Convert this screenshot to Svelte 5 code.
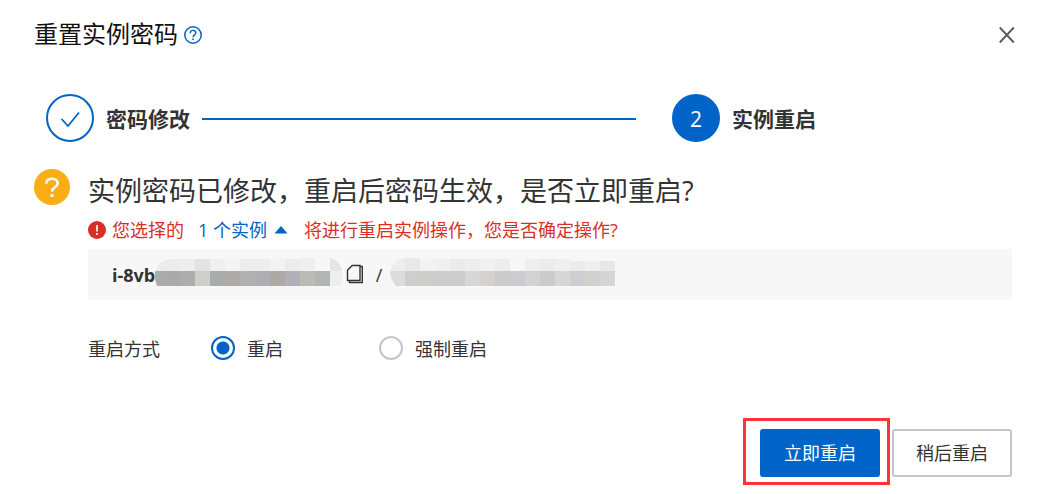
<script lang="ts">
const steps = [
  { title: "密码修改", done: true },
  { title: "实例重启", done: false },
];

const modes = [
  { value: "normal", label: "重启" },
  { value: "force", label: "强制重启" },
];

// masked values are drawn as two rows of grey cells
const idMask = {
  width: 188,
  offset: 10,
  top: ["#ececec", "#ececea", "#eeeeed", "#e3e3e4", "#eeefef", "#f3f4f4", "#ececec", "#eeeeec", "#f1f2f2", "#ececec", "#eeefee", "#f7f7f7", "#e5e5e3", "#efeff0"],
  bottom: ["#ababab", "#a9aaab", "#adadad", "#cecfca", "#a9abad", "#aeaba8", "#b1b1b1", "#adaeb1", "#ada9a5", "#b0b1b6", "#bbbab5", "#b3b5b4", "#eceef0"],
};

const nameMask = {
  width: 225,
  offset: 15,
  top: ["#ededed", "#e9e9e9", "#f2f2f2", "#f0f0f0", "#ebebeb", "#eeeeee", "#f1f1f1", "#ededed", "#f6f8f7", "#efefef", "#ebedec", "#efefef", "#ebebeb", "#efefed", "#e7e7e7"],
  bottom: ["#dddcdc", "#cecece", "#cdcdca", "#cbcccb", "#cccccc", "#d7d7d7", "#d3d2cf", "#cbcbcb", "#cbccd2", "#d2d2d2", "#cbcbcb", "#d6d6d6", "#cdced1", "#d1d1ce", "#d5d5d5"],
};

let mode = $state("normal");
let expanded = $state(true);
</script>

{#snippet mask(data: typeof idMask, id: string)}
  <svg class="mask" width={data.width} height="28" aria-hidden="true">
    <clipPath {id}>
      <path
        d={id === "mask-id"
          ? "M0 14Q4 1 18 1H144V0H176Q187 4 187 16Q188 24 186 28H2Q-1 20 0 14Z"
          : "M0 14Q3 0 18 0H30V1H180V3H225V28H6Q0 20 0 14Z"}
      />
    </clipPath>
    <g clip-path="url(#{id})">
      {#each data.top as color, i (i)}
        <rect x={i ? data.offset + (i - 1) * 15 : 0} y="0" width="15" height="13" fill={color} />
      {/each}
      {#each data.bottom as color, i (i)}
        <rect x={i ? data.offset + (i - 1) * 15 : 0} y="13" width="15" height="15" fill={color} />
      {/each}
    </g>
  </svg>
{/snippet}

<div class="dialog" role="dialog" aria-labelledby="dialog-title">
  <header>
    <h1 id="dialog-title">重置实例密码</h1>
    <button class="icon-btn help" type="button" aria-label="帮助">
      <svg width="18" height="18" viewBox="0 0 18 18" fill="none" stroke="#0064c8">
        <circle cx="9" cy="9" r="8.2" stroke-width="1.5" />
        <path d="M6.2 7.2C6.2 5.3 7.4 4.4 9 4.4S11.8 5.4 11.8 7C11.8 8.9 9 8.9 9 11.2" stroke-width="1.4" />
        <path d="M9 12.4V14" stroke-width="1.6" />
      </svg>
    </button>
    <button class="icon-btn close" type="button" aria-label="关闭">
      <svg width="18" height="18" viewBox="0 0 18 18" fill="none" stroke="#5c5c60" stroke-width="1.9">
        <path d="M1.8 1.5 15.8 16.5M15.8 1.5 1.8 16.5" />
      </svg>
    </button>
  </header>

  <ol class="steps">
    {#each steps as step, i (step.title)}
      <li class:done={step.done}>
        <span class="step-node">
          {#if step.done}
            <svg width="20" height="18" viewBox="0 0 20 18" fill="none" stroke="#0064c8" stroke-width="1.8">
              <path d="M1.5 9 8 16 19 2.5" />
            </svg>
          {:else}
            {i + 1}
          {/if}
        </span>
        <span class="step-title">{step.title}</span>
      </li>
    {/each}
  </ol>

  <main>
    <svg width="36" height="36" viewBox="0 0 36 36" fill="none" aria-hidden="true">
      <circle cx="18" cy="18" r="18" fill="#faad14" />
      <path
        d="M12.3 14.8C12.3 11.4 14.7 9.8 18 9.8S23.7 11.6 23.7 14.4C23.7 18.2 18 18.4 18 22.4"
        stroke="#fff"
        stroke-width="2.5"
      />
      <circle cx="18" cy="26.5" r="1.8" fill="#fff" />
    </svg>

    <div class="content">
      <h2>实例密码已修改，重启后密码生效，是否立即重启?</h2>
      <div class="warning">
        <svg width="18" height="18" viewBox="0 0 18 18" aria-hidden="true">
          <circle cx="9" cy="9" r="9" fill="#d93026" />
          <path d="M9 4V10.5M9 12V14" stroke="#fff" stroke-width="1.6" />
        </svg>
        <span>您选择的</span>
        <button class="toggle" type="button" aria-expanded={expanded} onclick={() => (expanded = !expanded)}>
          1 个实例
          <svg class:collapsed={!expanded} width="14" height="8" viewBox="0 0 14 8" aria-hidden="true">
            <path d="M7 0 13.5 7.5H.5Z" fill="#0064c8" />
          </svg>
        </button>
        <span>将进行重启实例操作，您是否确定操作?</span>
      </div>

      {#if expanded}
        <div class="instance">
          <strong>i-8vb</strong>
          {@render mask(idMask, "mask-id")}
          <button class="icon-btn copy" type="button" aria-label="复制">
            <svg width="18" height="20" viewBox="0 0 18 20" fill="none" stroke="#333" stroke-width="1.4">
              <path d="M6.2 1.5H14V16.5H1.5V6.2Z" />
              <path d="M14 2.5H16.3V18.5H3.5V16.5" />
            </svg>
          </button>
          <span class="slash">/</span>
          {@render mask(nameMask, "mask-name")}
        </div>
      {/if}

      <fieldset>
        <legend>重启方式</legend>
        {#each modes as item (item.value)}
          <label>
            <input type="radio" name="mode" value={item.value} bind:group={mode} />
            <span>{item.label}</span>
          </label>
        {/each}
      </fieldset>
    </div>
  </main>

  <footer>
    <div class="highlight">
      <button class="btn primary" type="button">立即重启</button>
    </div>
    <button class="btn" type="button">稍后重启</button>
  </footer>
</div>

<style>
:global(body) {
  margin: 0;
  background: #fff;
}

.dialog {
  box-sizing: border-box;
  padding: 0 26px 16px 34px;
  color: #333;
  font-family: "Open Sans", "Noto Sans CJK SC", sans-serif;
  font-size: 18px;
  line-height: 24px;
}

button,
input {
  font: inherit;
  margin: 0;
}

svg {
  display: block;
  flex: none;
}

header {
  display: flex;
  align-items: center;
  height: 70px;
}

h1 {
  margin: 0;
  padding-bottom: 2px;
  color: #111;
  font-size: 24px;
  font-weight: 400;
  line-height: 36px;
}

.icon-btn {
  padding: 0;
  border: 0;
  background: none;
  cursor: pointer;
}

.help {
  margin-left: 6px;
}

.close {
  margin-left: auto;
  margin-right: -4px;
}

.steps {
  display: flex;
  margin: 24px 0 0;
  padding: 0 0 0 12px;
  list-style: none;
}

.steps li {
  display: flex;
  align-items: center;
  width: 340px;
}

.steps li.done {
  flex: 1;
}

.steps li.done::after {
  content: "";
  flex: 1;
  height: 2px;
  margin: 2px 36px 0 12px;
  background: #0064c8;
}

.step-node {
  box-sizing: border-box;
  display: flex;
  align-items: center;
  justify-content: center;
  width: 48px;
  height: 48px;
  padding-top: 2px;
  border: 2px solid #0064c8;
  border-radius: 50%;
  background: #0064c8;
  color: #fff;
  font-size: 21px;
}

.done .step-node {
  background: #fff;
}

.step-title {
  margin-left: 12px;
  padding-top: 2px;
  font-size: 21px;
  font-weight: 700;
}

main {
  display: flex;
  gap: 18px;
  margin-top: 27px;
}

.content {
  flex: 1;
  min-width: 0;
}

h2 {
  margin: 0;
  font-size: 27px;
  font-weight: 400;
  line-height: 44px;
}

.warning {
  display: flex;
  align-items: center;
  height: 34px;
  padding-bottom: 2px;
  color: #d93026;
}

.warning > svg {
  margin-right: 6px;
}

.toggle {
  display: flex;
  align-items: center;
  gap: 7px;
  margin: 0 16px 0 14px;
  padding: 0;
  border: 0;
  background: none;
  color: #0064c8;
  cursor: pointer;
}

.collapsed {
  transform: rotate(180deg);
}

.instance {
  display: flex;
  align-items: center;
  height: 51px;
  padding-left: 24px;
  background: #f7f7f7;
}

.instance strong {
  width: 43px;
  font-weight: 700;
  white-space: nowrap;
}

.mask {
  margin-bottom: 6px;
}

.copy {
  margin: 0 2px 2px 3px;
}

.slash {
  width: 24px;
  padding-left: 2px;
  box-sizing: border-box;
  text-align: center;
}

fieldset {
  display: flex;
  align-items: center;
  gap: 96px;
  margin: 35px 0 0;
  padding: 0;
  border: 0;
}

legend {
  float: left;
  width: 72px;
  margin-right: -45px;
  padding: 2px 0 0;
}

label {
  display: flex;
  align-items: center;
  gap: 12px;
  height: 24px;
  cursor: pointer;
}

label span {
  padding-top: 2px;
}

input[type="radio"] {
  appearance: none;
  box-sizing: border-box;
  width: 24px;
  height: 24px;
  border: 2px solid #c0c6cc;
  border-radius: 50%;
  background: #fff;
}

input[type="radio"]:checked {
  border-color: #0064c8;
  background: radial-gradient(circle, #0064c8 6px, #fff 7px);
}

footer {
  display: flex;
  justify-content: flex-end;
  gap: 12px;
  margin-top: 68px;
}

.highlight {
  position: relative;
}

.highlight::after {
  content: "";
  position: absolute;
  inset: -11px -10px -8px -17px;
  border: 3px solid #ff3333;
  pointer-events: none;
}

.btn {
  box-sizing: border-box;
  width: 120px;
  height: 48px;
  padding: 0;
  border: 2px solid #c0c6cc;
  border-radius: 3px;
  background: #fff;
  color: #333;
  cursor: pointer;
}

.btn.primary {
  border-color: #0064c8;
  background: #0064c8;
  color: #fff;
}
</style>
